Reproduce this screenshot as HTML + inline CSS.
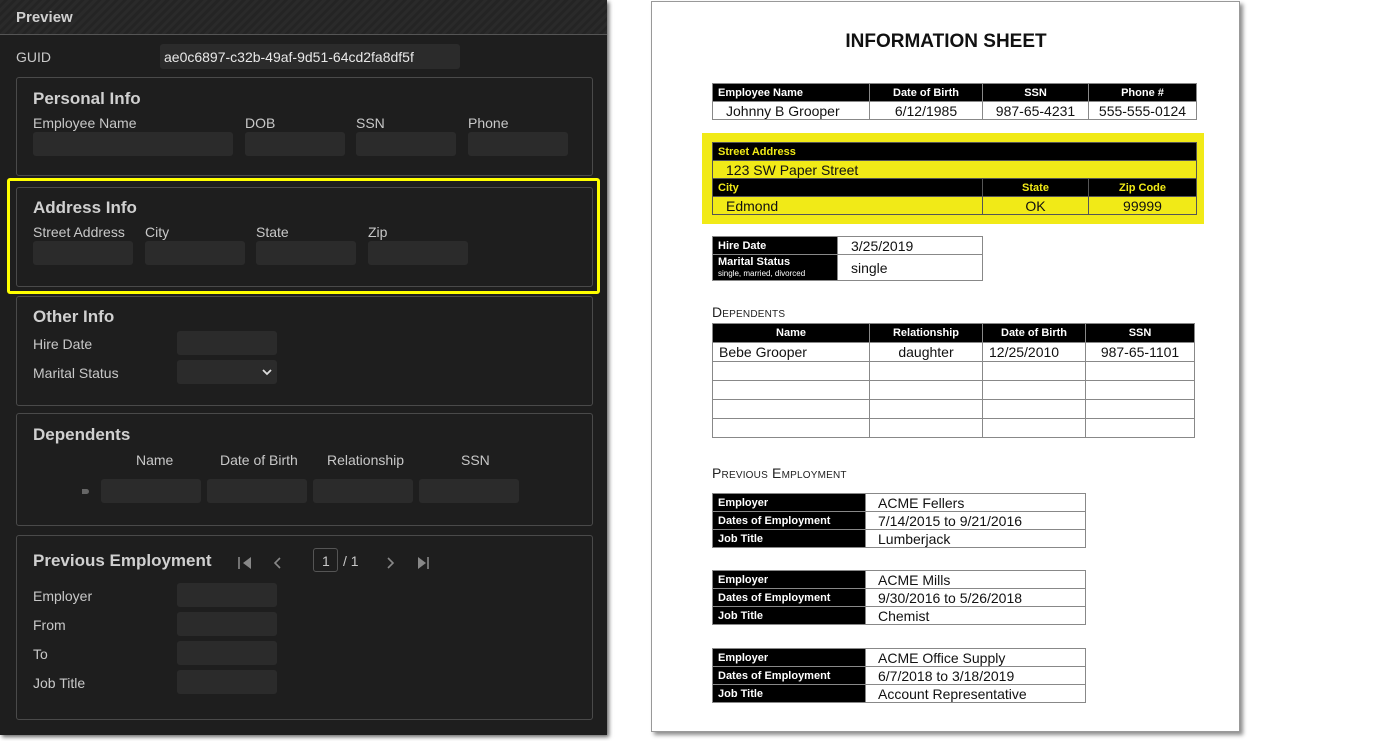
<!DOCTYPE html>
<html><head><meta charset="utf-8"><style>
*{box-sizing:border-box;margin:0;padding:0}
body{width:1396px;height:741px;background:#fff;position:relative;overflow:hidden;font-family:"Liberation Sans",sans-serif}
.a{position:absolute}
#L{left:0;top:0;width:607px;height:735px;background:#1e1e1e;box-shadow:2px 2px 4px rgba(0,0,0,.6)}
#hd{left:0;top:0;width:607px;height:35px;border-bottom:1px solid #555;background:repeating-linear-gradient(135deg,#2a2a2a 0 3px,#242424 3px 6px)}
.t{color:#c8c8c8;font-size:14px;white-space:nowrap}
.h{color:#d0d0d0;font-size:17px;font-weight:bold;white-space:nowrap}
.in{background:#2b2b2b;border-radius:3px;height:24px;width:100px}
.box{left:16px;width:577px;border:1px solid #4a4a4a;border-radius:3px}
#R{left:651px;top:1px;width:589px;height:731px;background:#fff;border:1px solid #999;box-shadow:3px 3px 4px rgba(0,0,0,.45)}
table{position:absolute;border-collapse:collapse;table-layout:fixed}
td{border:1px solid #888;font-size:14px;color:#111;height:18px;padding:0 6px;white-space:nowrap;line-height:16px}
td.k{background:#000;color:#fff;font-size:11px;font-weight:bold;padding:0 5px}
.c{text-align:center}
.y td{background:#f1ea17;border-color:#555}
.y td.k{background:#000;color:#f1ea17}
.sc{font-size:14px;color:#222;font-variant:small-caps;letter-spacing:.2px}
.dep td{height:19px}
</style></head><body>
<div id="L" class="a">
<div id="hd" class="a"></div>
<div class="a h" style="left:16px;top:9px;font-size:15px">Preview</div>
<div class="a t" style="left:16px;top:49px">GUID</div>
<div class="a in" style="left:160px;top:44px;width:300px;height:25px"></div>
<div class="a t" style="left:164px;top:49px;color:#e8e8e8">ae0c6897-c32b-49af-9d51-64cd2fa8df5f</div>

<div class="a box" style="top:77px;height:99px"></div>
<div class="a h" style="left:33px;top:89px">Personal Info</div>
<div class="a t" style="left:33px;top:115px">Employee Name</div>
<div class="a t" style="left:245px;top:115px">DOB</div>
<div class="a t" style="left:356px;top:115px">SSN</div>
<div class="a t" style="left:468px;top:115px">Phone</div>
<div class="a in" style="left:33px;top:132px;width:200px"></div>
<div class="a in" style="left:245px;top:132px"></div>
<div class="a in" style="left:356px;top:132px"></div>
<div class="a in" style="left:468px;top:132px"></div>

<div class="a" style="left:7px;top:178px;width:593px;height:116px;border:3px solid #ffff00;border-radius:3px"></div>
<div class="a box" style="top:187px;height:100px"></div>
<div class="a h" style="left:33px;top:198px">Address Info</div>
<div class="a t" style="left:33px;top:224px">Street Address</div>
<div class="a t" style="left:145px;top:224px">City</div>
<div class="a t" style="left:256px;top:224px">State</div>
<div class="a t" style="left:368px;top:224px">Zip</div>
<div class="a in" style="left:33px;top:241px"></div>
<div class="a in" style="left:145px;top:241px"></div>
<div class="a in" style="left:256px;top:241px"></div>
<div class="a in" style="left:368px;top:241px"></div>

<div class="a box" style="top:296px;height:110px"></div>
<div class="a h" style="left:33px;top:307px">Other Info</div>
<div class="a t" style="left:33px;top:336px">Hire Date</div>
<div class="a t" style="left:33px;top:365px">Marital Status</div>
<div class="a in" style="left:177px;top:331px"></div>
<div class="a in" style="left:177px;top:360px"></div>
<svg class="a" style="left:262px;top:367px" width="10" height="10"><path d="M1 3 L5 7 L9 3" stroke="#ddd" stroke-width="1.8" fill="none"/></svg>

<div class="a box" style="top:413px;height:113px"></div>
<div class="a h" style="left:33px;top:425px">Dependents</div>
<div class="a t" style="left:136px;top:452px">Name</div>
<div class="a t" style="left:220px;top:452px">Date of Birth</div>
<div class="a t" style="left:327px;top:452px">Relationship</div>
<div class="a t" style="left:461px;top:452px">SSN</div>
<div class="a" style="left:82px;top:489px;width:7px;height:5px;background:#666;border-radius:0 3px 3px 0"></div>
<div class="a in" style="left:101px;top:479px"></div>
<div class="a in" style="left:207px;top:479px"></div>
<div class="a in" style="left:313px;top:479px"></div>
<div class="a in" style="left:419px;top:479px"></div>

<div class="a box" style="top:535px;height:185px"></div>
<div class="a h" style="left:33px;top:551px">Previous Employment</div>
<svg class="a" style="left:237px;top:555px" width="200" height="16" fill="none" stroke="#888" stroke-width="1.6">
<path d="M2 2v12" /><path d="M14 2L6 8l8 6z" fill="#888" stroke="none"/>
<path d="M43 3l-5 5 5 5"/>
<path d="M151 3l5 5-5 5"/>
<path d="M181 2l8 6-8 6z" fill="#888" stroke="none"/><path d="M191 2v12"/>
</svg>
<div class="a" style="left:313px;top:548px;width:25px;height:24px;border:1px solid #555;border-radius:3px"></div>
<div class="a t" style="left:322px;top:553px">1</div>
<div class="a t" style="left:343px;top:553px">/ 1</div>
<div class="a t" style="left:33px;top:588px">Employer</div>
<div class="a t" style="left:33px;top:617px">From</div>
<div class="a t" style="left:33px;top:646px">To</div>
<div class="a t" style="left:33px;top:675px">Job Title</div>
<div class="a in" style="left:177px;top:583px"></div>
<div class="a in" style="left:177px;top:612px"></div>
<div class="a in" style="left:177px;top:641px"></div>
<div class="a in" style="left:177px;top:670px"></div>
</div>

<div id="R" class="a"></div>
<div class="a" style="left:651px;top:31px;width:590px;text-align:center;font-size:19px;font-weight:bold;color:#111">INFORMATION SHEET</div>

<table style="left:712px;top:83px;width:484px">
<col style="width:157px"><col style="width:113px"><col style="width:106px"><col style="width:108px">
<tr><td class="k">Employee Name</td><td class="k c">Date of Birth</td><td class="k c">SSN</td><td class="k c">Phone #</td></tr>
<tr><td style="padding-left:13px">Johnny B Grooper</td><td class="c">6/12/1985</td><td class="c">987-65-4231</td><td class="c">555-555-0124</td></tr>
</table>

<div class="a" style="left:702px;top:133px;width:502px;height:91px;background:#f1ea17"></div>
<table class="y" style="left:712px;top:142px;width:484px">
<col style="width:270px"><col style="width:106px"><col style="width:108px">
<tr><td class="k" colspan="3">Street Address</td></tr>
<tr><td colspan="3" style="padding-left:13px">123 SW Paper Street</td></tr>
<tr><td class="k">City</td><td class="k c">State</td><td class="k c">Zip Code</td></tr>
<tr><td style="padding-left:13px">Edmond</td><td class="c">OK</td><td class="c">99999</td></tr>
</table>

<table style="left:712px;top:236px;width:270px">
<col style="width:125px"><col style="width:145px">
<tr><td class="k">Hire Date</td><td style="padding-left:13px">3/25/2019</td></tr>
<tr><td class="k" style="height:26px;line-height:11px">Marital Status<br><span style="font-size:8px;font-weight:normal">single, married, divorced</span></td><td style="padding-left:13px">single</td></tr>
</table>

<div class="a sc" style="left:712px;top:304px">Dependents</div>
<table class="dep" style="left:712px;top:323px;width:482px">
<col style="width:157px"><col style="width:113px"><col style="width:103px"><col style="width:109px">
<tr><td class="k c" style="height:18px">Name</td><td class="k c">Relationship</td><td class="k c">Date of Birth</td><td class="k c">SSN</td></tr>
<tr><td>Bebe Grooper</td><td class="c">daughter</td><td>12/25/2010</td><td class="c">987-65-1101</td></tr>
<tr><td></td><td></td><td></td><td></td></tr>
<tr><td></td><td></td><td></td><td></td></tr>
<tr><td></td><td></td><td></td><td></td></tr>
<tr><td></td><td></td><td></td><td></td></tr>
</table>

<div class="a sc" style="left:712px;top:465px">Previous Employment</div>
<table style="left:712px;top:493px;width:373px">
<col style="width:153px"><col style="width:220px">
<tr><td class="k">Employer</td><td style="padding-left:12px">ACME Fellers</td></tr>
<tr><td class="k">Dates of Employment</td><td style="padding-left:12px">7/14/2015 to 9/21/2016</td></tr>
<tr><td class="k">Job Title</td><td style="padding-left:12px">Lumberjack</td></tr>
</table>
<table style="left:712px;top:570px;width:373px">
<col style="width:153px"><col style="width:220px">
<tr><td class="k">Employer</td><td style="padding-left:12px">ACME Mills</td></tr>
<tr><td class="k">Dates of Employment</td><td style="padding-left:12px">9/30/2016 to 5/26/2018</td></tr>
<tr><td class="k">Job Title</td><td style="padding-left:12px">Chemist</td></tr>
</table>
<table style="left:712px;top:648px;width:373px">
<col style="width:153px"><col style="width:220px">
<tr><td class="k">Employer</td><td style="padding-left:12px">ACME Office Supply</td></tr>
<tr><td class="k">Dates of Employment</td><td style="padding-left:12px">6/7/2018 to 3/18/2019</td></tr>
<tr><td class="k">Job Title</td><td style="padding-left:12px">Account Representative</td></tr>
</table>
</body></html>
